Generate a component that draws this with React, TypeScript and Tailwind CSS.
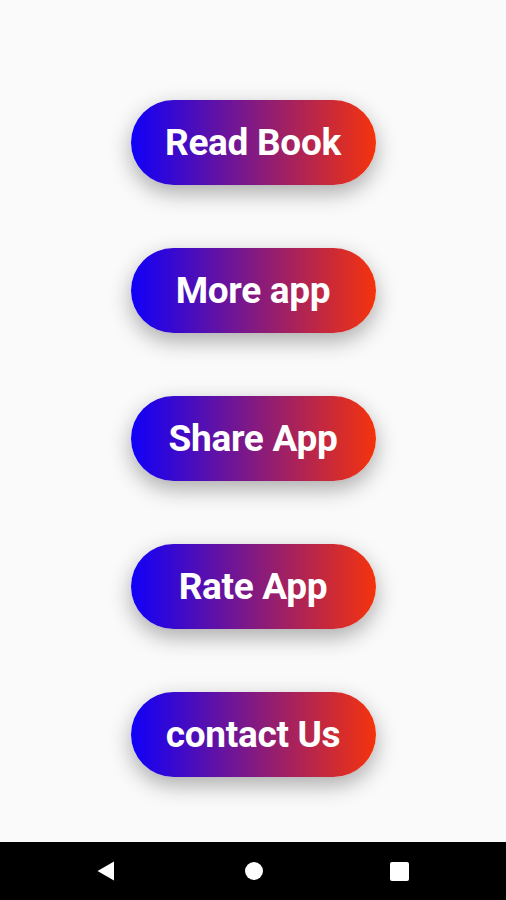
const LABELS = ['Read Book', 'More app', 'Share App', 'Rate App', 'contact Us'];

export default function App() {
  return (
    <div className="w-[506px] h-[900px] flex flex-col bg-[#fafafa]" style={{ fontFamily: 'Roboto, "Noto Sans", sans-serif' }}>
      <div className="flex-1 flex flex-col items-center pt-[100px] gap-[63px]">
        {LABELS.map(label => (
          <button
            key={label}
            className="w-[245px] h-[85px] rounded-full bg-linear-to-r/srgb from-[#1000f8] to-[#f5330c] text-white text-[37px] font-bold tracking-[-0.3px] shadow-[0_8px_22px_rgba(0,0,0,0.32)] flex items-center justify-center"
          >
            {label}
          </button>
        ))}
      </div>
      <div className="h-[58px] bg-black flex items-center pl-[97px]">
        <svg width="18" height="20" viewBox="0 0 18 20">
          <path d="M17 0.5 L17 19.5 L0.5 10 Z" fill="white" />
        </svg>
        <div className="ml-[130px] w-[18px] h-[18px] rounded-full bg-white" />
        <div className="ml-[127px] w-[19px] h-[19px] rounded-[2px] bg-white" />
      </div>
    </div>
  );
}
